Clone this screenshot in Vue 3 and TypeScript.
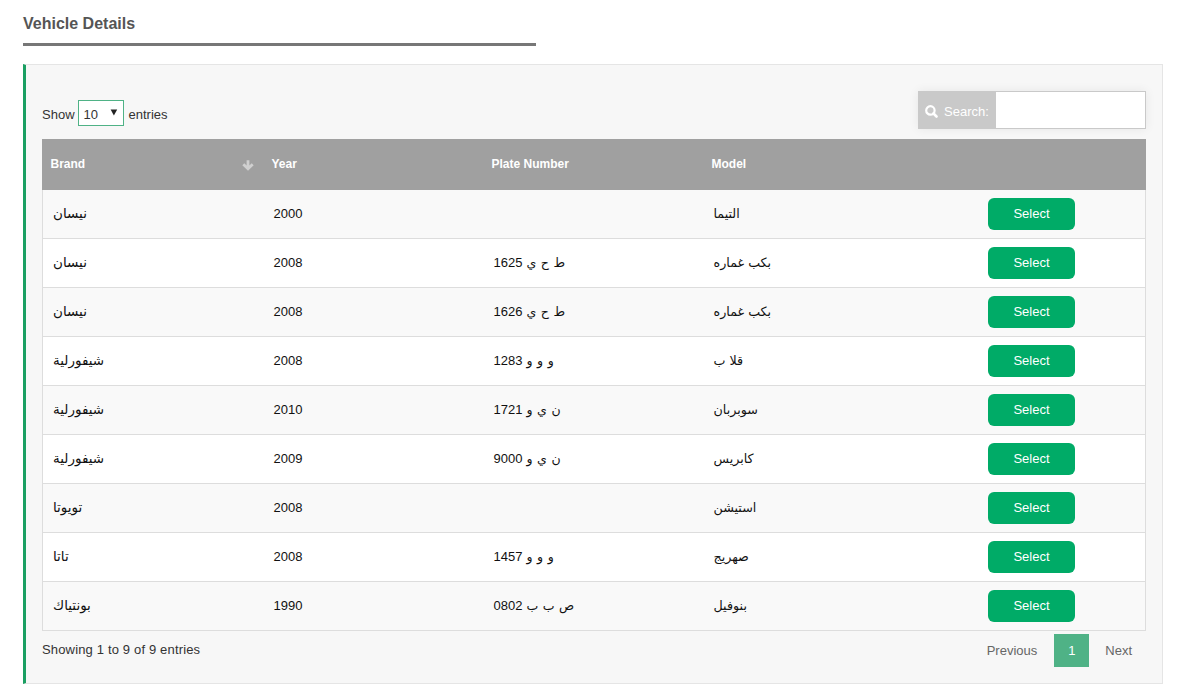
<script setup lang="ts">
import { ref } from 'vue'

interface Vehicle {
  brand: string
  year: string
  letters: string
  digits: string
  model: string
}

const pageSize = ref('10')
const query = ref('')

const vehicles: Vehicle[] = [
  { brand: 'نيسان', year: '2000', letters: '', digits: '', model: 'التيما' },
  { brand: 'نيسان', year: '2008', letters: 'ط ح ي', digits: '1625', model: 'بكب غماره' },
  { brand: 'نيسان', year: '2008', letters: 'ط ح ي', digits: '1626', model: 'بكب غماره' },
  { brand: 'شيفورلية', year: '2008', letters: 'و و و', digits: '1283', model: 'قلا ب' },
  { brand: 'شيفورلية', year: '2010', letters: 'ن ي و', digits: '1721', model: 'سوبربان' },
  { brand: 'شيفورلية', year: '2009', letters: 'ن ي و', digits: '9000', model: 'كابريس' },
  { brand: 'تويوتا', year: '2008', letters: '', digits: '', model: 'استيشن' },
  { brand: 'تاتا', year: '2008', letters: 'و و و', digits: '1457', model: 'صهريج' },
  { brand: 'بونتياك', year: '1990', letters: 'ص ب ب', digits: '0802', model: 'بنوفيل' },
]
</script>

<template>
  <main class="page">
    <h1 class="title">Vehicle Details</h1>
    <section class="panel">
      <div class="toolbar">
        <div class="length">
          <span class="word">Show</span>
          <button class="size" type="button">
            <span>{{ pageSize }}</span>
            <svg width="8" height="7" viewBox="0 0 8 7"><path d="M0.6 0.4h6.6L3.9 6.6z" fill="#222" /></svg>
          </button>
          <span class="word">entries</span>
        </div>
        <label class="search">
          <span class="search-label">
            <svg width="13" height="13" viewBox="0 0 13 13" fill="none" stroke="#fff">
              <circle cx="5.4" cy="5.4" r="4.2" stroke-width="2.2" />
              <path d="M8.5 8.5l3 3" stroke-width="2.6" stroke-linecap="round" />
            </svg>
            <span>Search:</span>
          </span>
          <input v-model="query" class="search-input" type="text" />
        </label>
      </div>

      <table class="grid">
        <thead>
          <tr>
            <th class="c-brand">
              <div class="sorted">
                <span>Brand</span>
                <svg width="12" height="11" viewBox="0 0 12 11" fill="none" stroke="#d0d0d0" stroke-width="2.8">
                  <path d="M6 0.3v8.4M1.3 4.3L6 8.8l4.7-4.5" />
                </svg>
              </div>
            </th>
            <th class="c-mid">Year</th>
            <th class="c-mid">Plate Number</th>
            <th class="c-mid">Model</th>
            <th></th>
          </tr>
        </thead>
        <tbody>
          <tr v-for="(v, i) in vehicles" :key="i">
            <td><span class="ar brand">{{ v.brand }}</span></td>
            <td>{{ v.year }}</td>
            <td><template v-if="v.digits"><span>{{ v.digits }}</span><span class="ar letters">{{ v.letters }}</span></template></td>
            <td><span class="ar">{{ v.model }}</span></td>
            <td class="action"><button class="select" type="button">Select</button></td>
          </tr>
        </tbody>
      </table>

      <div class="footer">
        <span class="info">Showing 1 to 9 of 9 entries</span>
        <nav class="pager">
          <a class="prev">Previous</a>
          <a class="current">1</a>
          <a class="next">Next</a>
        </nav>
      </div>
    </section>
  </main>
</template>

<style>
body {
  background: #fff;
}
</style>

<style scoped>
.page {
  box-sizing: border-box;
  width: 1184px;
  height: 698px;
  padding: 13px 21px 0 23px;
  overflow: hidden;
  font-family: "Liberation Sans", Arial, "DejaVu Sans", sans-serif;
  font-size: 13px;
  color: #333;
}
.title {
  box-sizing: border-box;
  width: 513px;
  height: 33px;
  margin: 0 0 18px;
  padding-top: 1px;
  border-bottom: 3px solid #777;
  font-size: 16px;
  line-height: 20px;
  font-weight: 700;
  color: #555;
}
.panel {
  box-sizing: border-box;
  width: 1140px;
  height: 620px;
  padding: 26px 16px 0;
  border: 1px solid #e5e5e5;
  border-left: 3px solid #1a9f62;
  background: #f7f7f7;
}
.toolbar {
  display: flex;
  justify-content: space-between;
  align-items: flex-start;
  height: 48px;
}
.length {
  display: flex;
  align-items: center;
  padding-top: 9px;
}
.word {
  padding-top: 2px;
}
.size {
  box-sizing: border-box;
  display: flex;
  justify-content: space-between;
  align-items: center;
  width: 46px;
  height: 26px;
  margin: 0 5px 0 3px;
  padding: 2px 5px 0;
  border: 1px solid #4fb286;
  background: #fff;
  font: inherit;
  color: #333;
}
.size svg {
  margin-bottom: 4px;
}
.search {
  box-sizing: border-box;
  display: flex;
  width: 228px;
  height: 38px;
  border: 1px solid #c9c9c9;
  background: #c9c9c9;
  box-shadow: 0 0 10px rgba(0, 0, 0, 0.07);
}
.search-label {
  display: flex;
  align-items: center;
  gap: 6px;
  width: 71px;
  padding: 3px 0 0 6px;
  color: #fff;
}
.search-label svg {
  margin-bottom: 1px;
}
.search-input {
  flex: 1;
  min-width: 0;
  padding: 0 8px;
  border: 0;
  outline: 0;
  background: #fff;
  font: inherit;
}
.grid {
  width: 1104px;
  table-layout: fixed;
  border-collapse: separate;
  border-spacing: 0;
}
th {
  box-sizing: border-box;
  height: 51px;
  padding: 0 9px 2px 8.5px;
  background: #a0a0a0;
  color: #fff;
  font-size: 12px;
  font-weight: 700;
  text-align: left;
}
.c-brand,
.c-mid {
  width: 220px;
}
.c-brand {
  width: 221px;
}
.sorted {
  display: flex;
  justify-content: space-between;
  align-items: center;
}
.sorted svg {
  margin-top: 3px;
}
td {
  box-sizing: border-box;
  height: 49px;
  padding: 0 10px 1px 10.5px;
  border-bottom: 1px solid #ddd;
  background: #fff;
  color: #111;
  white-space: nowrap;
  line-height: 16px;
}
tbody tr:nth-child(odd) td {
  background: #f9f9f9;
}
td:first-child {
  padding-left: 10px;
  border-left: 1px solid #ddd;
}
td:last-child {
  border-right: 1px solid #ddd;
}
.ar {
  display: inline-block;
  direction: rtl;
  font-family: "DejaVu Sans", sans-serif;
  font-size: 12.7px;
}
.brand {
  font-size: 13.5px;
}
.letters {
  margin-left: 4px;
  font-size: 12.5px;
  word-spacing: 0.6px;
}
td.action {
  padding: 0 0 0 65px;
}
.select {
  display: block;
  width: 87px;
  height: 32px;
  padding: 0 0 1px;
  border: 0;
  border-radius: 6px;
  background: #00ab67;
  color: #fff;
  font: inherit;
}
.footer {
  display: flex;
  justify-content: space-between;
  align-items: flex-start;
  padding-top: 3px;
}
.info {
  padding-top: 8px;
  letter-spacing: 0.16px;
}
.pager {
  display: flex;
  align-items: center;
  padding-right: 14px;
  color: #666;
}
.prev {
  margin-right: 1px;
}
.current {
  width: 35px;
  margin: 0 16px;
  background: #4fb286;
  color: #fff;
  line-height: 33px;
  text-align: center;
}
</style>
